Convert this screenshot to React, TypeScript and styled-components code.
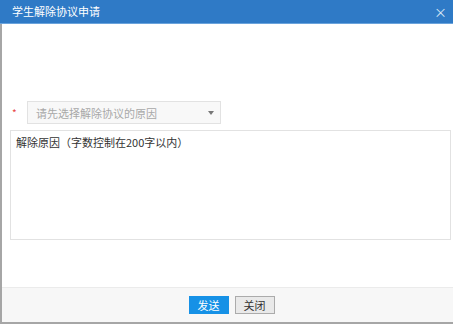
import React from "react";
import styled, { createGlobalStyle } from "styled-components";

const GlobalStyle = createGlobalStyle`
  html, body {
    margin: 0;
    padding: 0;
    background: #ffffff;
  }
  body {
    font-family: "Noto Sans CJK SC", "Noto Sans", sans-serif;
    font-size: 11px;
    color: #333;
  }
`;

const Dialog = styled.div`
  width: 453px;
  height: 324px;
  box-sizing: border-box;
  display: flex;
  flex-direction: column;
  background: #fff;
  border-left: 2px solid #a6a6a6;
  border-bottom: 2px solid #a6a6a6;
`;

const Header = styled.div`
  height: 23px;
  margin-left: -2px;
  display: flex;
  align-items: center;
  justify-content: space-between;
  padding: 0 6px 0 12px;
  background: #2f7ac6;
  border-bottom: 1px solid #6aa3dc;
  color: #fff;
`;

const Title = styled.span`
  font-size: 11px;
  line-height: 23px;
`;

const Close = styled.span`
  font-size: 13px;
  line-height: 23px;
  color: #dbe8f6;
  cursor: pointer;
`;

const Body = styled.div`
  flex: 1;
  display: flex;
  flex-direction: column;
  gap: 6px;
  padding: 77px 1px 0 8px;
`;

const Row = styled.div`
  display: flex;
  align-items: center;
`;

const Required = styled.span`
  width: 15px;
  color: #e84545;
  font-size: 10px;
  padding-left: 2px;
`;

const Select = styled.div`
  width: 194px;
  height: 23px;
  box-sizing: border-box;
  display: flex;
  align-items: center;
  justify-content: space-between;
  padding: 0 6px 0 8px;
  border: 1px solid #e2e2e2;
  background: #f8f8f8;
  color: #a8a8a8;
  font-size: 11px;
`;

const Arrow = styled.span`
  width: 0;
  height: 0;
  border-left: 3px solid transparent;
  border-right: 3px solid transparent;
  border-top: 4px solid #777;
`;

const TextArea = styled.div`
  width: 441px;
  height: 110px;
  box-sizing: border-box;
  padding: 3px 5px;
  border: 1px solid #e2e2e2;
  color: #333;
  font-size: 11px;
  line-height: 16px;
`;

const Footer = styled.div`
  height: 35px;
  box-sizing: border-box;
  display: flex;
  justify-content: center;
  align-items: center;
  gap: 6px;
  padding-left: 8px;
  background: #f7f7f7;
  border-top: 1px solid #ebebeb;
`;

const Button = styled.button<{ primary?: boolean }>`
  height: 18px;
  padding: 0 8px;
  font-family: inherit;
  font-size: 11px;
  line-height: 16px;
  cursor: pointer;
  border: 1px solid ${(p) => (p.primary ? "#1691e6" : "#ababab")};
  background: ${(p) => (p.primary ? "#1691e6" : "#e9e9e9")};
  color: ${(p) => (p.primary ? "#fff" : "#333")};
`;

export default function App() {
  return (
    <>
      <GlobalStyle />
      <Dialog>
        <Header>
          <Title>学生解除协议申请</Title>
          <Close>×</Close>
        </Header>
        <Body>
          <Row>
            <Required>*</Required>
            <Select>
              请先选择解除协议的原因
              <Arrow />
            </Select>
          </Row>
          <TextArea>解除原因（字数控制在200字以内）</TextArea>
        </Body>
        <Footer>
          <Button primary>发送</Button>
          <Button>关闭</Button>
        </Footer>
      </Dialog>
    </>
  );
}
